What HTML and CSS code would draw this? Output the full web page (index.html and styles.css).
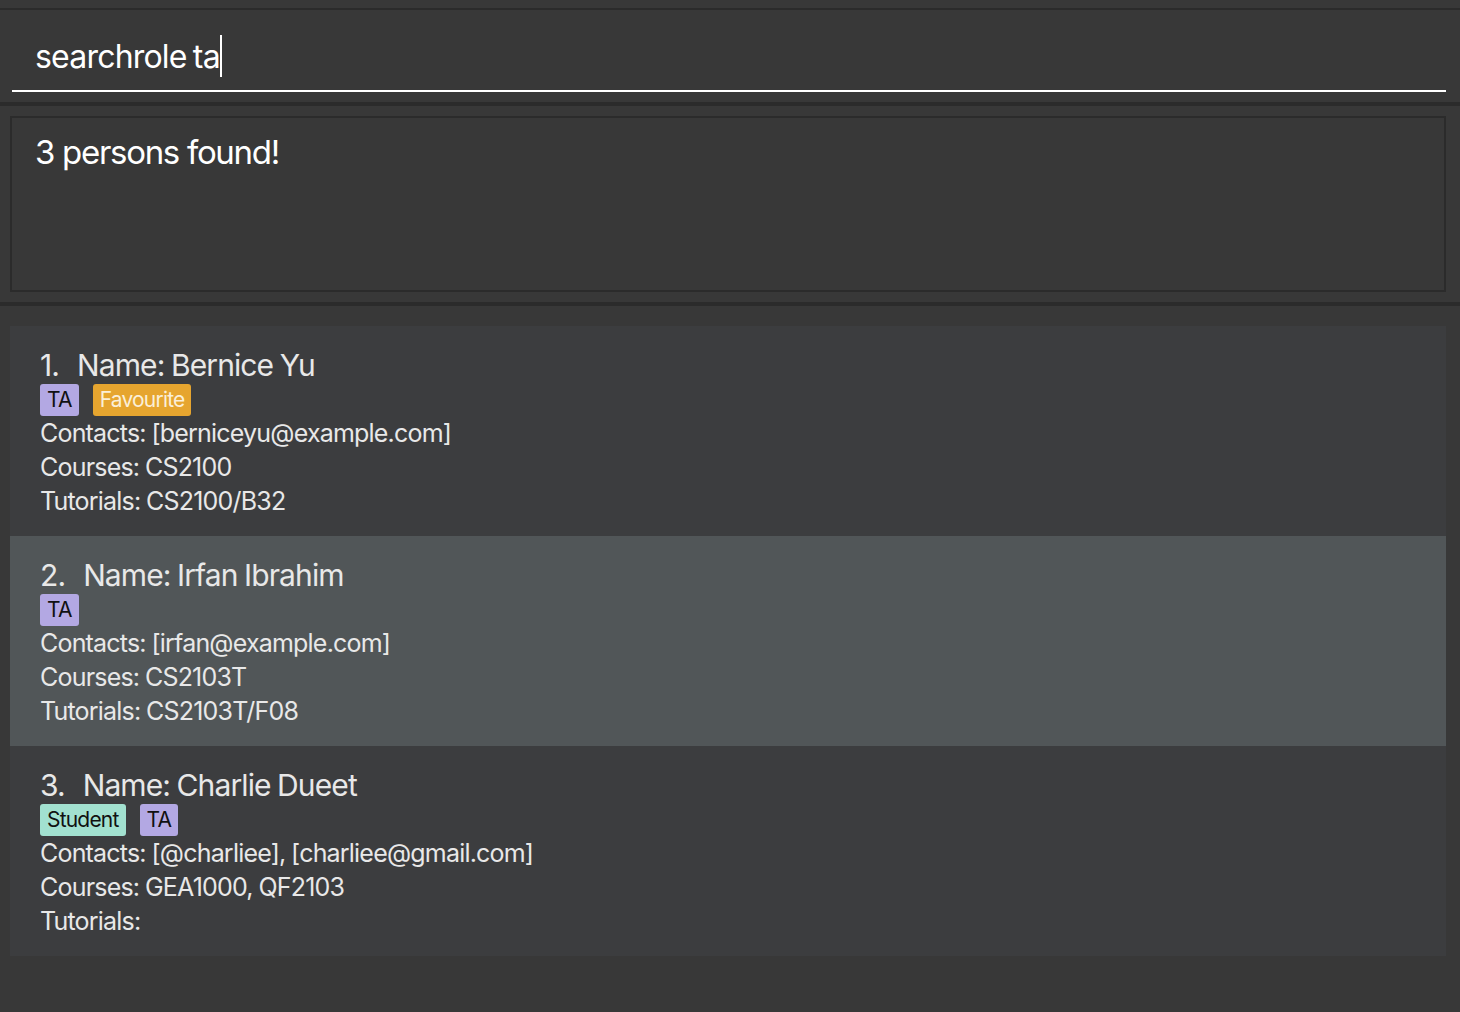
FILE: index.html
```html
<!DOCTYPE html>
<html>
<head>
<meta charset="utf-8">
<link rel="stylesheet" href="styles.css">
</head>
<body>
<div class="app">
  <div class="command-pane">
    <div class="command-box">
      <span class="command-text">searchrole ta</span><span class="caret"></span>
    </div>
  </div>
  <div class="result-pane">
    <div class="result-box">3 persons found!</div>
  </div>
  <div class="list-pane">
    <div class="card">
      <div class="name"><span class="idx">1.</span>Name: Bernice Yu</div>
      <div class="tags"><span class="tag ta">TA</span><span class="tag fav">Favourite</span></div>
      <div class="line">Contacts: [berniceyu@example.com]</div>
      <div class="line">Courses: CS2100</div>
      <div class="line">Tutorials: CS2100/B32</div>
    </div>
    <div class="card selected">
      <div class="name"><span class="idx">2.</span>Name: Irfan Ibrahim</div>
      <div class="tags"><span class="tag ta">TA</span></div>
      <div class="line">Contacts: [irfan@example.com]</div>
      <div class="line">Courses: CS2103T</div>
      <div class="line">Tutorials: CS2103T/F08</div>
    </div>
    <div class="card">
      <div class="name"><span class="idx">3.</span>Name: Charlie Dueet</div>
      <div class="tags"><span class="tag student">Student</span><span class="tag ta">TA</span></div>
      <div class="line">Contacts: [@charliee], [charliee@gmail.com]</div>
      <div class="line">Courses: GEA1000, QF2103</div>
      <div class="line">Tutorials: </div>
    </div>
  </div>
</div>
</body>
</html>
```
FILE: styles.css
```css
html, body {
  margin: 0;
  padding: 0;
  background: #383838;
  width: 1460px;
  height: 1012px;
  overflow: hidden;
}
body {
  font-family: Inter, "Noto Sans", sans-serif;
  color: #ffffff;
}
.app {
  padding-top: 8px;
}
.command-pane {
  border-top: 2px solid #2b2b2b;
  border-bottom: 4px solid #2b2b2b;
  height: 98px;
  padding: 0 14px 0 12px;
  box-sizing: border-box;
}
.command-box {
  height: 82px;
  border-bottom: 2px solid #ffffff;
  display: flex;
  align-items: center;
  padding-left: 23px;
  padding-top: 12px;
  box-sizing: border-box;
}
.command-text {
  font-size: 32px;
  letter-spacing: -0.8px;
  word-spacing: -2px;
  color: #ffffff;
}
.caret {
  display: inline-block;
  width: 2px;
  height: 42px;
  background: #ffffff;
  margin-left: 0px;
}
.result-pane {
  padding: 10px 14px 10px 10px;
  border-bottom: 4px solid #2b2b2b;
  height: 200px;
  box-sizing: border-box;
}
.result-box {
  border: 2px solid #2b2b2b;
  height: 176px;
  box-sizing: border-box;
  padding: 14px 23px;
  font-size: 33px;
  letter-spacing: -1.3px;
  word-spacing: 0;
  line-height: 40px;
  color: #ffffff;
}
.list-pane {
  margin-top: 20px;
  margin-left: 10px;
  width: 1436px;
}
.card {
  height: 210px;
  box-sizing: border-box;
  background: #3c3d3f;
  padding: 22px 30px 0 30px;
  color: #e8e8e8;
}
.card.selected {
  background: #515658;
}
.name {
  font-size: 30px;
  line-height: 34px;
  height: 34px;
  letter-spacing: -0.9px;
  word-spacing: -1px;
}
.idx {
  display: inline-block;
  margin-right: 18px;
}
.tags {
  display: flex;
  gap: 14px;
  margin-top: 2px;
  height: 32px;
}
.tag {
  height: 32px;
  line-height: 32px;
  font-size: 21px;
  letter-spacing: -0.8px;
  padding: 0 7px;
  border-radius: 3px;
  box-sizing: border-box;
}
.tag.ta {
  background: #b3a8e3;
  color: #111111;
}
.tag.fav {
  background: #e6a52f;
  color: #fbefd8;
}
.tag.student {
  background: #a2e1d0;
  color: #111111;
}
.line {
  font-size: 25px;
  line-height: 34px;
  height: 34px;
  letter-spacing: -0.8px;
  word-spacing: -0.5px;
}
```
